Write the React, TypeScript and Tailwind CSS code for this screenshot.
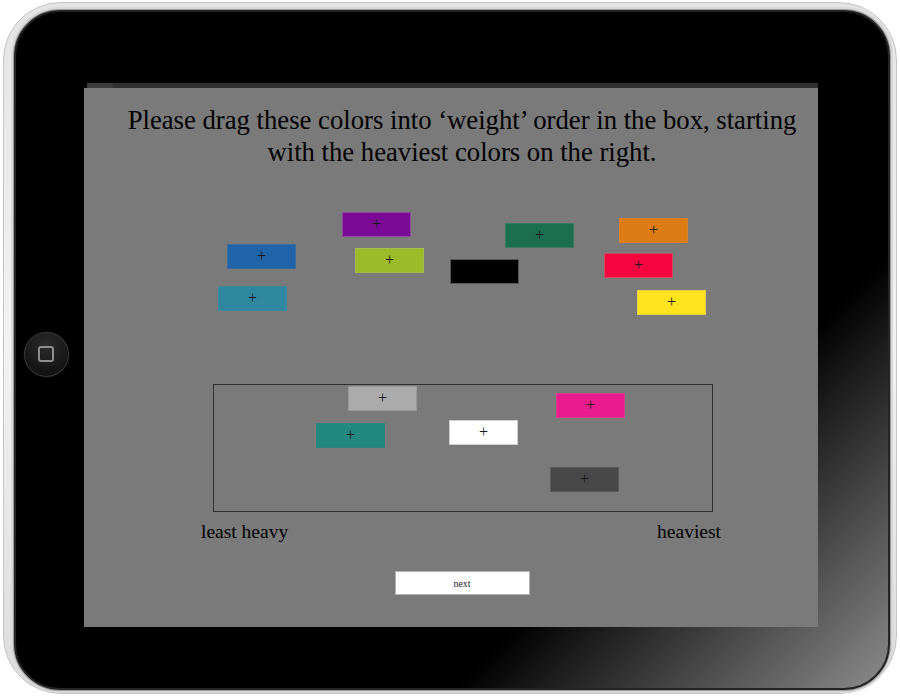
const serif = "font-['Liberation_Serif','Times_New_Roman',serif]"

type Tile = { pos: string; color: string; plus?: boolean }

// loose tiles, placed on the free canvas above the box
const looseTiles: Tile[] = [
  { pos: "left-[258px] top-[44px]", color: "bg-[#7a0a96] border-[#8c4a9e]" },
  { pos: "left-[143px] top-[76px]", color: "bg-[#2163a8] border-[#3a6ea2]" },
  { pos: "left-[271px] top-[80px]", color: "bg-[#9cbb28] border-[#a6bd4c]" },
  { pos: "left-[134px] top-[118px]", color: "bg-[#2f88a0] border-[#3f8aa0]" },
  { pos: "left-[421px] top-[55px]", color: "bg-[#1b6e4f] border-[#3a7a60]" },
  { pos: "left-[535px] top-[50px]", color: "bg-[#dd7b14] border-[#d98030]" },
  { pos: "left-[366px] top-[91px]", color: "bg-black border-[#555]", plus: false },
  { pos: "left-[520px] top-[85px]", color: "bg-[#f6053f] border-[#d04a66]" },
  { pos: "left-[553px] top-[122px]", color: "bg-[#ffe31c] border-[#e6cf42]" },
]

// tiles already dropped into the box
const boxTiles: Tile[] = [
  { pos: "left-[134px] top-[1px]", color: "bg-[#ababab] border-[#9a9a9a]" },
  { pos: "left-[102px] top-[38px]", color: "bg-[#21877f] border-[#2f8580]" },
  { pos: "left-[235px] top-[35px]", color: "bg-white border-[#cfcfcf]" },
  { pos: "left-[342px] top-[8px]", color: "bg-[#e81c8c] border-[#d8408f]" },
  { pos: "left-[336px] top-[82px]", color: "bg-[#484848] border-[#5a5a5a]" },
]

function ColorTile({ tile }: { tile: Tile }) {
  return (
    <div
      className={`absolute ${tile.pos} ${tile.color} w-[69px] h-[25px] border flex items-center justify-center`}
    >
      {tile.plus !== false && (
        <span className={`${serif} text-[16px] leading-none text-[#1a1a1a] -mt-[1px]`}>+</span>
      )}
    </div>
  )
}

function HomeButton() {
  return (
    <div className="w-[45px] h-[45px] rounded-full bg-[radial-gradient(circle_at_50%_30%,#2c2c2c,#141414_70%)] border border-[#3a3a3a] flex items-center justify-center shadow-[0_0_2px_rgba(255,255,255,0.15)]">
      <div className="w-[16px] h-[16px] rounded-[3px] border-2 border-[#8e8e8e]" />
    </div>
  )
}

export default function App() {
  return (
    <div className="w-[900px] h-[696px] bg-white pt-[2px] pl-[3px]">
      <div className="w-[894px] h-[692px] rounded-[58px] border border-[#c4c4c4] bg-[linear-gradient(180deg,#e4e4e4,#f2f2f2_50%,#dcdcdc)] pl-[10px] pt-[7px] pr-[6px] pb-[3px]">
        <div className="w-[876px] h-[680px] rounded-[46px] border-2 border-[#242424] shadow-[0_0_0_1px_#9c9c9c,0_0_0_3px_#d8d8d8] bg-[linear-gradient(135deg,#000_72%,#8c8c8c_100%)] flex overflow-hidden">
          <div className="w-[68px] pr-[8px] pt-[8px] flex items-center justify-center">
            <HomeButton />
          </div>

          <div className="pt-[71px]">
            <div className="ml-[3px] w-[731px] h-[5px] bg-[#303030] flex">
              <div className="w-[26px] bg-[#3c3c3c]" />
            </div>

            <div className={`w-[734px] h-[539px] bg-[#7a7a7a] ${serif} text-black`}>
              <h1 className="pt-[16px] pl-[22px] text-center text-[26.7px] leading-[32px] font-normal">
                Please drag these colors into ‘weight’ order in the box, starting with the heaviest colors on the right.
              </h1>

              <div className="relative h-[216px]">
                {looseTiles.map((t, i) => (
                  <ColorTile key={i} tile={t} />
                ))}
              </div>

              <div className="relative ml-[129px] w-[500px] h-[128px] border border-[#303030]">
                {boxTiles.map((t, i) => (
                  <ColorTile key={i} tile={t} />
                ))}
              </div>

              <div className="mt-[8px] ml-[117px] w-[520px] flex justify-between text-[19.5px] leading-[24px]">
                <span>least heavy</span>
                <span>heaviest</span>
              </div>

              <div className="mt-[27px] pl-[22px] flex justify-center">
                <button className="w-[135px] h-[24px] bg-white border border-[#b4b4b4] text-[10px] text-[#1b1b2b] flex items-center justify-center">
                  next
                </button>
              </div>
            </div>
          </div>
        </div>
      </div>
    </div>
  )
}
